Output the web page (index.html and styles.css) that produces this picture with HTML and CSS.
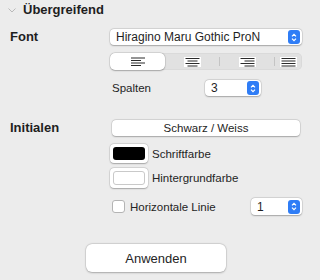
FILE: index.html
```html
<html lang="de">

<head>
    <meta charset="UTF-8">
    <meta name="viewport" content="width=device-width, initial-scale=1.0">
    <title>Übergreifend</title>
    <link rel="stylesheet" href="styles.css">
</head>

<body>
    <div class="panel">
        <div class="disclosure">
            <svg class="chevron" width="8" height="5" viewBox="0 0 8 5">
                <polyline points="0.5,0.5 4,4 7.5,0.5" fill="none" stroke="#b9b9b9" stroke-width="1" />
            </svg>
            <span class="title">Übergreifend</span>
        </div>

        <div class="group font-group">
            <div class="label">Font</div>
            <div class="controls">
                <div class="popup font-popup">
                    <span class="value">Hiragino Maru Gothic ProN</span>
                    <span class="stepper">
                        <svg width="6" height="9" viewBox="0 0 6 9">
                            <polyline points="1,3.3 3,1.3 5,3.3" fill="none" stroke="white" stroke-width="1.2" />
                            <polyline points="1,5.7 3,7.7 5,5.7" fill="none" stroke="white" stroke-width="1.2" />
                        </svg>
                    </span>
                </div>

                <div class="segmented">
                    <div class="segment selected">
                        <svg width="16" height="9" viewBox="0 0 16 9">
                            <rect x="1" y="0.5" width="14" height="1" fill="#2b2b2b" />
                            <rect x="1" y="3" width="10" height="1" fill="#2b2b2b" />
                            <rect x="1" y="5.5" width="14" height="1" fill="#2b2b2b" />
                            <rect x="1" y="8" width="10" height="1" fill="#2b2b2b" />
                        </svg>
                    </div>
                    <div class="segment">
                        <svg width="17" height="10" viewBox="0 0 17 10">
                            <rect width="17" height="10" fill="white" />
                            <rect x="1.5" y="1" width="14" height="1" fill="#2b2b2b" />
                            <rect x="3.5" y="3.5" width="10" height="1" fill="#2b2b2b" />
                            <rect x="1.5" y="6" width="14" height="1" fill="#2b2b2b" />
                            <rect x="3.5" y="8.5" width="10" height="1" fill="#2b2b2b" />
                        </svg>
                    </div>
                    <div class="divider"></div>
                    <div class="segment">
                        <svg width="17" height="10" viewBox="0 0 17 10">
                            <rect width="17" height="10" fill="white" />
                            <rect x="1.5" y="1" width="14" height="1" fill="#2b2b2b" />
                            <rect x="5.5" y="3.5" width="10" height="1" fill="#2b2b2b" />
                            <rect x="1.5" y="6" width="14" height="1" fill="#2b2b2b" />
                            <rect x="5.5" y="8.5" width="10" height="1" fill="#2b2b2b" />
                        </svg>
                    </div>
                    <div class="divider"></div>
                    <div class="segment last">
                        <svg width="17" height="10" viewBox="0 0 17 10">
                            <rect width="17" height="10" fill="white" />
                            <rect x="1.5" y="1" width="14" height="1" fill="#2b2b2b" />
                            <rect x="1.5" y="3.5" width="14" height="1" fill="#2b2b2b" />
                            <rect x="1.5" y="6" width="14" height="1" fill="#2b2b2b" />
                            <rect x="1.5" y="8.5" width="14" height="1" fill="#2b2b2b" />
                        </svg>
                    </div>
                </div>

                <div class="row spalten-row">
                    <span class="row-label">Spalten</span>
                    <div class="popup spalten-popup">
                        <span class="value">3</span>
                        <span class="stepper">
                            <svg width="6" height="9" viewBox="0 0 6 9">
                                <polyline points="1,3.3 3,1.3 5,3.3" fill="none" stroke="white" stroke-width="1.2" />
                                <polyline points="1,5.7 3,7.7 5,5.7" fill="none" stroke="white" stroke-width="1.2" />
                            </svg>
                        </span>
                    </div>
                </div>
            </div>
        </div>

        <div class="group initialen-group">
            <div class="label">Initialen</div>
            <div class="controls">
                <button type="button" class="push">Schwarz / Weiss</button>

                <div class="row well-row black-row">
                    <span class="well"><span class="swatch black"></span></span>
                    <span class="well-label">Schriftfarbe</span>
                </div>
                <div class="row well-row white-row">
                    <span class="well"><span class="swatch white"></span></span>
                    <span class="well-label">Hintergrundfarbe</span>
                </div>

                <div class="row linie-row">
                    <span class="checkbox"></span>
                    <span class="check-label">Horizontale Linie</span>
                    <div class="popup linie-popup">
                        <span class="value">1</span>
                        <span class="stepper">
                            <svg width="6" height="9" viewBox="0 0 6 9">
                                <polyline points="1,3.3 3,1.3 5,3.3" fill="none" stroke="white" stroke-width="1.2" />
                                <polyline points="1,5.7 3,7.7 5,5.7" fill="none" stroke="white" stroke-width="1.2" />
                            </svg>
                        </span>
                    </div>
                </div>
            </div>
        </div>

        <div class="footer">
            <button type="button" class="apply">Anwenden</button>
        </div>
    </div>
</body>

</html>
```

FILE: styles.css
```css
html, body {
    margin: 0;
    padding: 0;
    background-color: #ececec;
}

body {
    font-family: "Liberation Sans", Arial, sans-serif;
    font-size: 11.5px;
    color: #242424;
}

.panel {
    width: 320px;
    height: 280px;
    overflow: hidden;
}

/* header */
.disclosure {
    height: 20px;
    display: flex;
    align-items: center;
    padding-left: 8px;
}

.chevron {
    margin-top: 1px;
}

.title {
    margin-left: 7px;
    font-size: 13px;
    font-weight: bold;
    color: #1e1e1e;
    margin-top: -2px;
}

/* label column + controls column */
.group {
    display: grid;
    grid-template-columns: 100px 192px;
    padding-left: 10px;
}

.font-group {
    margin-top: 9px;
}

.initialen-group {
    margin-top: 24px;
}

.label {
    font-size: 13px;
    font-weight: bold;
    color: #1e1e1e;
    height: 16px;
    line-height: 16px;
}

.controls {
    display: flex;
    flex-direction: column;
}

.row {
    display: flex;
    align-items: center;
}

/* popup buttons */
.popup {
    display: flex;
    align-items: center;
    justify-content: space-between;
    background-color: white;
    border-radius: 4px;
    height: 16px;
    box-shadow: 0 0 0 0.5px rgba(0, 0, 0, 0.12), 0 0.5px 1.5px rgba(0, 0, 0, 0.25);
}

.popup .value {
    padding-left: 6px;
    font-size: 12px;
    color: #1f1f1f;
}

.stepper {
    width: 12px;
    height: 14px;
    margin-right: 2px;
    border-radius: 3px;
    background-color: #2f7df6;
    display: flex;
    align-items: center;
    justify-content: center;
}

.font-popup {
    width: 192px;
}

/* alignment control */
.segmented {
    margin-top: 8px;
    height: 17px;
    width: 192px;
    border-radius: 5px;
    background-color: #e1e1e1;
    box-shadow: inset 0 0 0 0.5px rgba(0, 0, 0, 0.06);
    display: flex;
    align-items: center;
}

.segment {
    width: 54px;
    height: 17px;
    display: flex;
    align-items: center;
    justify-content: center;
}

.segment.selected {
    width: 55px;
    background-color: white;
    border-radius: 5px;
    box-shadow: 0 0 0 0.5px rgba(0, 0, 0, 0.12), 0 0.5px 1.5px rgba(0, 0, 0, 0.25);
}

.segment.last {
    flex: 1;
}

.divider {
    width: 1px;
    height: 9px;
    background-color: #c4c4c4;
}

.spalten-row {
    margin-top: 10px;
}

.row-label {
    width: 93px;
    padding-left: 2px;
}

.spalten-popup {
    width: 56px;
    height: 16px;
}

/* Initialen */
.push {
    margin: 0 2px;
    height: 16px;
    padding: 0;
    border: none;
    border-radius: 4px;
    background-color: white;
    font-family: "Liberation Sans", Arial, sans-serif;
    font-size: 11.5px;
    color: #242424;
    box-shadow: 0 0 0 0.5px rgba(0, 0, 0, 0.12), 0 0.5px 1.5px rgba(0, 0, 0, 0.25);
}

.well-row {
    margin-top: 8px;
}

.white-row {
    margin-top: 5px;
}

.well {
    width: 38px;
    height: 19px;
    box-sizing: border-box;
    padding: 3px;
    background-color: white;
    border-radius: 4px;
    box-shadow: 0 0 0 0.5px rgba(0, 0, 0, 0.12), 0 0.5px 1.5px rgba(0, 0, 0, 0.25);
    display: flex;
}

.white-row .well {
    height: 20px;
}

.swatch {
    flex: 1;
    border-radius: 3px;
}

.swatch.black {
    background-color: black;
}

.swatch.white {
    background-color: white;
    border: 1px solid #c9c9c9;
}

.well-label {
    margin-left: 4px;
}

.linie-row {
    margin-top: 10px;
    height: 17px;
}

.checkbox {
    width: 11px;
    height: 11px;
    margin-left: 2px;
    border-radius: 3px;
    background-color: white;
    border: 0.5px solid #b4b4b4;
}

.check-label {
    margin-left: 5px;
    width: 121px;
}

.linie-popup {
    width: 51px;
    height: 17px;
}

/* footer */
.footer {
    margin-top: 29px;
    display: flex;
    justify-content: center;
    padding-right: 8px;
}

.apply {
    width: 140px;
    height: 28px;
    padding: 0;
    border: none;
    border-radius: 6px;
    background-color: white;
    font-family: "Liberation Sans", Arial, sans-serif;
    font-size: 13px;
    color: #242424;
    box-shadow: 0 0 0 0.5px rgba(0, 0, 0, 0.1), 0 0.5px 2px rgba(0, 0, 0, 0.25);
}
```
